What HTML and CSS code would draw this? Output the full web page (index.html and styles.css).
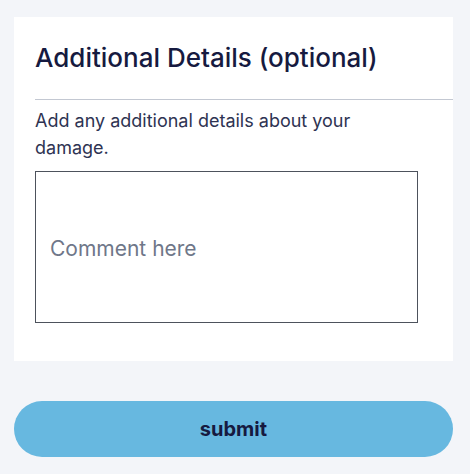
FILE: index.html
```html
<!DOCTYPE html>
<html lang="en">
<head>
<meta charset="utf-8">
<title>Additional Details</title>
<link rel="stylesheet" href="styles.css">
</head>
<body>
<main class="page">
  <section class="card">
    <h2 class="card-title">Additional Details (optional)</h2>
    <div class="divider"></div>
    <p class="card-desc">Add any additional details about your damage.</p>
    <textarea class="comment" placeholder="Comment here"></textarea>
  </section>
  <button class="submit" type="button">submit</button>
</main>
</body>
</html>
```

FILE: styles.css
```css
html, body {
  margin: 0;
  padding: 0;
  background: #f3f5f9;
}
body {
  font-family: Inter, "Noto Sans", sans-serif;
  color: #1b1f45;
}
.page {
  width: 439px;
  padding: 17px 0 0 14px;
  display: flex;
  flex-direction: column;
}
.card {
  background: #ffffff;
  padding: 0 35px 38px 21px;
  display: flex;
  flex-direction: column;
}
.card-title {
  margin: 0;
  padding-top: 25px;
  height: 82px;
  box-sizing: border-box;
  font-size: 26px;
  font-weight: 500;
  line-height: 32px;
  color: #161a40;
}
.divider {
  height: 1px;
  background: #c3c8d2;
  margin-right: -35px;
}
.card-desc {
  margin: 7px 0 0;
  max-width: 340px;
  font-size: 18px;
  line-height: 27px;
  color: #2e3352;
}
.comment {
  margin-top: 10px;
  width: 383px;
  height: 152px;
  box-sizing: border-box;
  border: 1px solid #4d525c;
  border-radius: 0;
  padding: 64px 14px 0;
  font-family: inherit;
  font-size: 21px;
  line-height: 25px;
  resize: none;
  outline: none;
}
.comment::placeholder {
  color: #6f7789;
}
.submit {
  margin-top: 40px;
  height: 56px;
  border: none;
  border-radius: 28px;
  background: #67b8e0;
  color: #161a40;
  font-family: inherit;
  font-size: 20px;
  font-weight: 700;
  cursor: pointer;
}
```
